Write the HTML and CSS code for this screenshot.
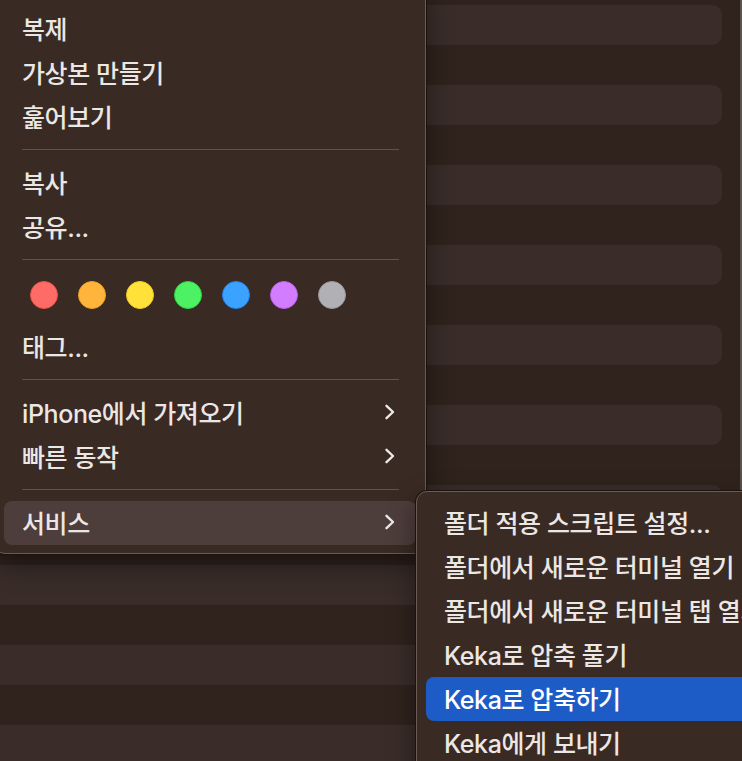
FILE: index.html
```html
<!DOCTYPE html>
<html lang="ko">
<head>
<meta charset="utf-8">
<title>Context menu</title>
<link rel="stylesheet" href="styles.css">
</head>
<body>
<div class="window">
  <div class="list">
    <div class="row"></div><div class="row"></div><div class="row"></div><div class="row"></div><div class="row"></div>
    <div class="row"></div><div class="row"></div><div class="row"></div><div class="row"></div><div class="row"></div>
  </div>
  <div class="edge"></div>
</div>

<div class="menu main-menu">
  <div class="item">복제</div>
  <div class="item">가상본 만들기</div>
  <div class="item">훑어보기</div>
  <div class="sep"></div>
  <div class="item">복사</div>
  <div class="item">공유...</div>
  <div class="sep"></div>
  <div class="tags">
    <span class="dot red"></span>
    <span class="dot orange"></span>
    <span class="dot yellow"></span>
    <span class="dot green"></span>
    <span class="dot blue"></span>
    <span class="dot purple"></span>
    <span class="dot gray"></span>
  </div>
  <div class="item">태그...</div>
  <div class="sep"></div>
  <div class="item has-sub"><span>iPhone에서 가져오기</span><svg class="chev" viewBox="0 0 12 16"><path d="M2.5 1.8 L9 8 L2.5 14.2"/></svg></div>
  <div class="item has-sub"><span>빠른 동작</span><svg class="chev" viewBox="0 0 12 16"><path d="M2.5 1.8 L9 8 L2.5 14.2"/></svg></div>
  <div class="sep"></div>
  <div class="item has-sub open"><span>서비스</span><svg class="chev" viewBox="0 0 12 16"><path d="M2.5 1.8 L9 8 L2.5 14.2"/></svg></div>
</div>

<div class="menu sub-menu">
  <div class="item">폴더 적용 스크립트 설정...</div>
  <div class="item">폴더에서 새로운 터미널 열기</div>
  <div class="item">폴더에서 새로운 터미널 탭 열기</div>
  <div class="item">Keka로 압축 풀기</div>
  <div class="item active">Keka로 압축하기</div>
  <div class="item">Keka에게 보내기</div>
</div>
</body>
</html>
```
FILE: styles.css
```css
html, body {
  margin: 0;
  padding: 0;
}
body {
  width: 742px;
  height: 761px;
  overflow: hidden;
  position: relative;
  background: #30231d;
  font-family: "Inter", "Noto Sans CJK KR", sans-serif;
  -webkit-font-smoothing: antialiased;
}
.window {
  display: flex;
  height: 761px;
}
.list {
  flex: 1;
  display: flex;
  flex-direction: column;
  gap: 40px;
  padding: 5px 18px 0 0;
}
.row {
  height: 40px;
  flex: none;
  background: #3a2d29;
  border-radius: 0 10px 10px 0;
}
.edge {
  width: 2px;
  background: #5a5350;
}

.menu {
  position: absolute;
  background: #3a2a24;
  border: 1px solid #6a5b55;
  box-shadow: 0 0 0 1px #1c1310, 0 10px 28px rgba(0, 0, 0, 0.45);
  border-radius: 11px;
  padding: 0 9px;
  color: #ebe7e5;
  font-size: 25px;
  font-weight: 500;
  white-space: nowrap;
}
.main-menu {
  left: -6px;
  top: -20px;
  width: 412px;
  padding-top: 26px;
  padding-bottom: 8px;
}
.sub-menu {
  left: 416px;
  top: 491px;
  width: 420px;
  height: 320px;
  padding-top: 9px;
}
.item {
  height: 44px;
  display: flex;
  align-items: center;
  justify-content: space-between;
  padding: 0 20px 2px 18px;
  box-sizing: border-box;
  border-radius: 8px;
  letter-spacing: -0.4px;
}
.item.open {
  background: #4e3e3b;
}
.item.active {
  background: #1d5cc7;
  color: #ffffff;
}
.chev {
  width: 12px;
  height: 16px;
  flex: none;
}
.chev path {
  fill: none;
  stroke: #ece8e6;
  stroke-width: 2.4;
  stroke-linecap: round;
  stroke-linejoin: round;
}
.sep {
  height: 1px;
  margin: 10px 17px 11px 18px;
  background: #62534d;
}
.tags {
  height: 54px;
  display: flex;
  gap: 20px;
  padding: 10px 0 0 26px;
  box-sizing: border-box;
}
.dot {
  width: 28px;
  height: 28px;
  border-radius: 50%;
  box-sizing: border-box;
  border: 1.5px solid;
}
.red { background: #ff6b66; border-color: #ec504b; }
.orange { background: #ffb53c; border-color: #f29e20; }
.yellow { background: #ffe13a; border-color: #f2cc1c; }
.green { background: #4cf263; border-color: #2fd648; }
.blue { background: #3ca2ff; border-color: #1e86f2; }
.purple { background: #d27dff; border-color: #bc5ff0; }
.gray { background: #b1b0b4; border-color: #9a999d; }
```
